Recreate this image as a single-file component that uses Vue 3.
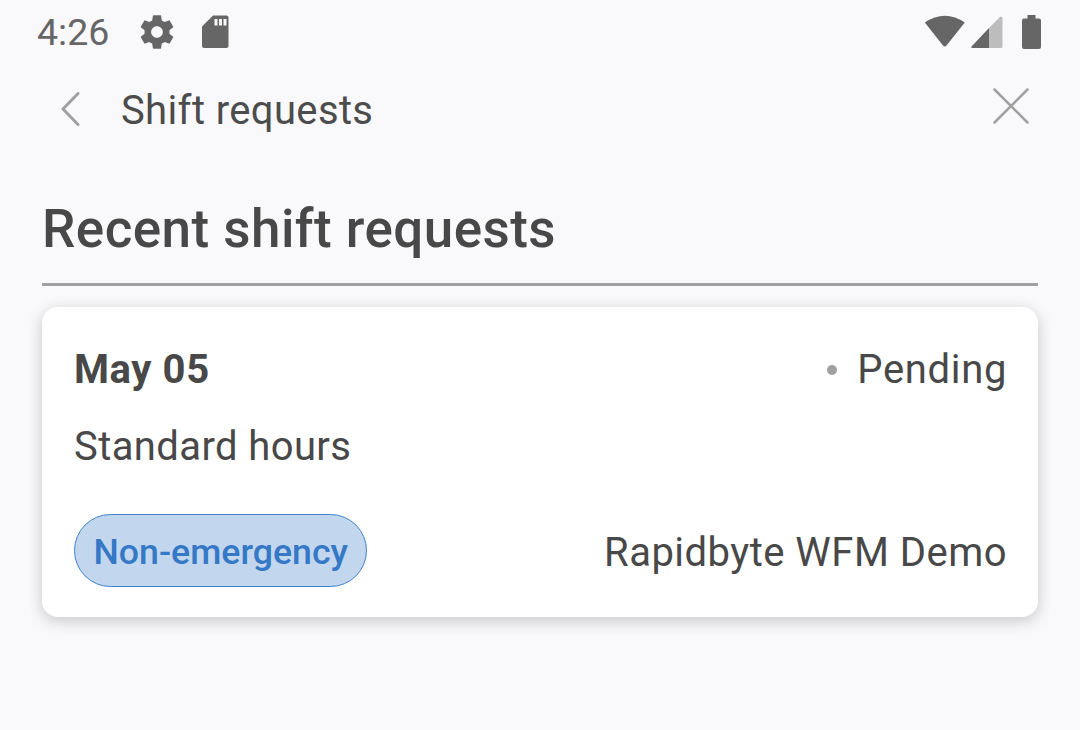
<template>
  <div class="screen">
    <div class="status-bar">
      <div class="status-left">
        <span class="time">4:26</span>
        <svg class="icon-gear" width="40" height="40" viewBox="0 0 24 24">
          <path fill="#666" d="M19.43 12.98c.04-.32.07-.64.07-.98s-.03-.66-.07-.98l2.11-1.65c.19-.15.24-.42.12-.64l-2-3.46c-.12-.22-.39-.3-.61-.22l-2.49 1c-.52-.4-1.08-.73-1.69-.98l-.38-2.65C14.46 2.18 14.25 2 14 2h-4c-.25 0-.46.18-.49.42l-.38 2.65c-.61.25-1.17.59-1.69.98l-2.49-1c-.23-.09-.49 0-.61.22l-2 3.46c-.13.22-.07.49.12.64l2.11 1.65c-.04.32-.07.65-.07.98s.03.66.07.98l-2.11 1.65c-.19.15-.24.42-.12.64l2 3.46c.12.22.39.3.61.22l2.49-1c.52.4 1.08.73 1.69.98l.38 2.65c.03.24.24.42.49.42h4c.25 0 .46-.18.49-.42l.38-2.65c.61-.25 1.17-.59 1.69-.98l2.49 1c.23.09.49 0 .61-.22l2-3.46c.12-.22.07-.49-.12-.64l-2.11-1.65zM12 15.5c-1.93 0-3.5-1.57-3.5-3.5s1.57-3.5 3.5-3.5 3.5 1.57 3.5 3.5-1.57 3.5-3.5 3.5z"/>
        </svg>
        <svg class="icon-sd" width="28" height="34" viewBox="0 0 28 34">
          <path fill="#666" fill-rule="evenodd" d="M12 0.500H25.500a2 2 0 0 1 2 2V31a2 2 0 0 1-2 2H3a2 2 0 0 1-2-2V11.500zM13.500 4v6.500h3V4zM18 4v6.500h3V4zM22.500 4v6.500h3V4z" />
        </svg>
      </div>
      <div class="status-right">
        <svg width="42" height="34" viewBox="0 0 42 34">
          <path fill="#666" d="M0.800 7.500Q21-6 40.800 7.500L22.500 30.500Q20.800 32.500 19 30.500Z" />
        </svg>
        <svg class="icon-signal" width="32" height="32" viewBox="0 0 32 32">
          <path fill="#bdbdbd" d="M29.500 0.500Q31.500 0.500 31.500 2.500V30.500Q31.500 32 30 32H18V12Z" />
          <path fill="#666" d="M18 12V32H1.500Q-0.500 32 0.500 30.500Z" />
        </svg>
        <svg class="icon-battery" width="19" height="34" viewBox="0 0 19 34">
          <path fill="#666" d="M5.500 0H13.500V3.500H17a2 2 0 0 1 2 2V32a2 2 0 0 1-2 2H2a2 2 0 0 1-2-2V5.500a2 2 0 0 1 2-2H5.500Z" />
        </svg>
      </div>
    </div>

    <div class="nav-bar">
      <svg class="icon-back" width="20" height="34" viewBox="0 0 20 34">
        <path d="M18 1.500L3 17L18 32.500" fill="none" stroke="#a0a0a0" stroke-width="3" stroke-linecap="round" stroke-linejoin="round" />
      </svg>
      <span class="nav-title">Shift requests</span>
      <svg class="icon-close" width="36" height="36" viewBox="0 0 36 36">
        <path d="M1.500 1.500L34.500 34.500M34.500 1.500L1.500 34.500" fill="none" stroke="#a0a0a0" stroke-width="2.500" stroke-linecap="round" />
      </svg>
    </div>

    <div class="content">
      <h1 class="heading">Recent shift requests</h1>
      <div class="card">
        <div class="row row-top">
          <span class="date">May 05</span>
          <span class="status"><i class="dot"></i>Pending</span>
        </div>
        <div class="hours">Standard hours</div>
        <div class="row row-bottom">
          <span class="chip">Non-emergency</span>
          <span class="org">Rapidbyte WFM Demo</span>
        </div>
      </div>
    </div>
  </div>
</template>

<script setup>
</script>

<style>
html, body { margin: 0; background: #f9f9fb; }
</style>

<style scoped>
.screen {
  width: 1080px;
  height: 730px;
  overflow: hidden;
  background: #f9f9fb;
  font-family: Roboto, "Liberation Sans", sans-serif;
  color: #484848;
}

.status-bar {
  height: 64px;
  padding: 0 39px 0 37px;
  display: flex;
  align-items: center;
  justify-content: space-between;
  box-sizing: border-box;
}
.status-left, .status-right { display: flex; align-items: center; }
.status-left svg, .status-right svg { display: block; }
.time { font-size: 37.5px; color: #666; margin-right: 28px; }
.icon-sd { margin-left: 24px; }
.icon-signal { margin-left: 5px; margin-right: 19px; }

.nav-bar {
  height: 90px;
  padding: 0 51px 0 60px;
  display: flex;
  align-items: center;
}
.icon-back { margin-right: 41px; }
.nav-title { font-size: 40px; letter-spacing: 0.37px; flex: 1; color: #4c4c4c; padding-top: 2px; }
.icon-close { margin-bottom: 6px; }

.content { padding: 0 42px; }
.heading {
  margin: 0;
  height: 132px;
  box-sizing: border-box;
  padding-top: 42px;
  font-size: 53px;
  line-height: 66px;
  letter-spacing: 0.45px;
  font-weight: 500;
  border-bottom: 3px solid #a0a0a0;
}
.card {
  margin-top: 21px;
  height: 310px;
  box-sizing: border-box;
  padding: 33px 31px 30px 32px;
  background: #fff;
  border-radius: 16px;
  box-shadow: 0 4px 16px rgba(0, 0, 0, 0.2);
  display: flex;
  flex-direction: column;
}
.row { display: flex; align-items: center; justify-content: space-between; }
.date { font-size: 40px; letter-spacing: 0.6px; font-weight: 700; line-height: 60px; }
.status { font-size: 40px; letter-spacing: 0.65px; line-height: 60px; display: flex; align-items: center; }
.dot {
  width: 10px;
  height: 10px;
  border-radius: 50%;
  background: #a0a0a0;
  margin-right: 20px;
}
.hours { font-size: 40px; letter-spacing: 0.4px; line-height: 50px; margin-top: 22px; }
.row-bottom { margin-top: auto; }
.chip {
  height: 73px;
  box-sizing: border-box;
  padding: 3px 18.5px 0;
  display: flex;
  align-items: center;
  font-size: 35.7px;
  font-weight: 500;
  color: #3478c6;
  background: #c2d6ee;
  border: 1px solid #3f82d0;
  border-radius: 37px;
}
.org { font-size: 40px; letter-spacing: 0.48px; padding-top: 3px; }
</style>
